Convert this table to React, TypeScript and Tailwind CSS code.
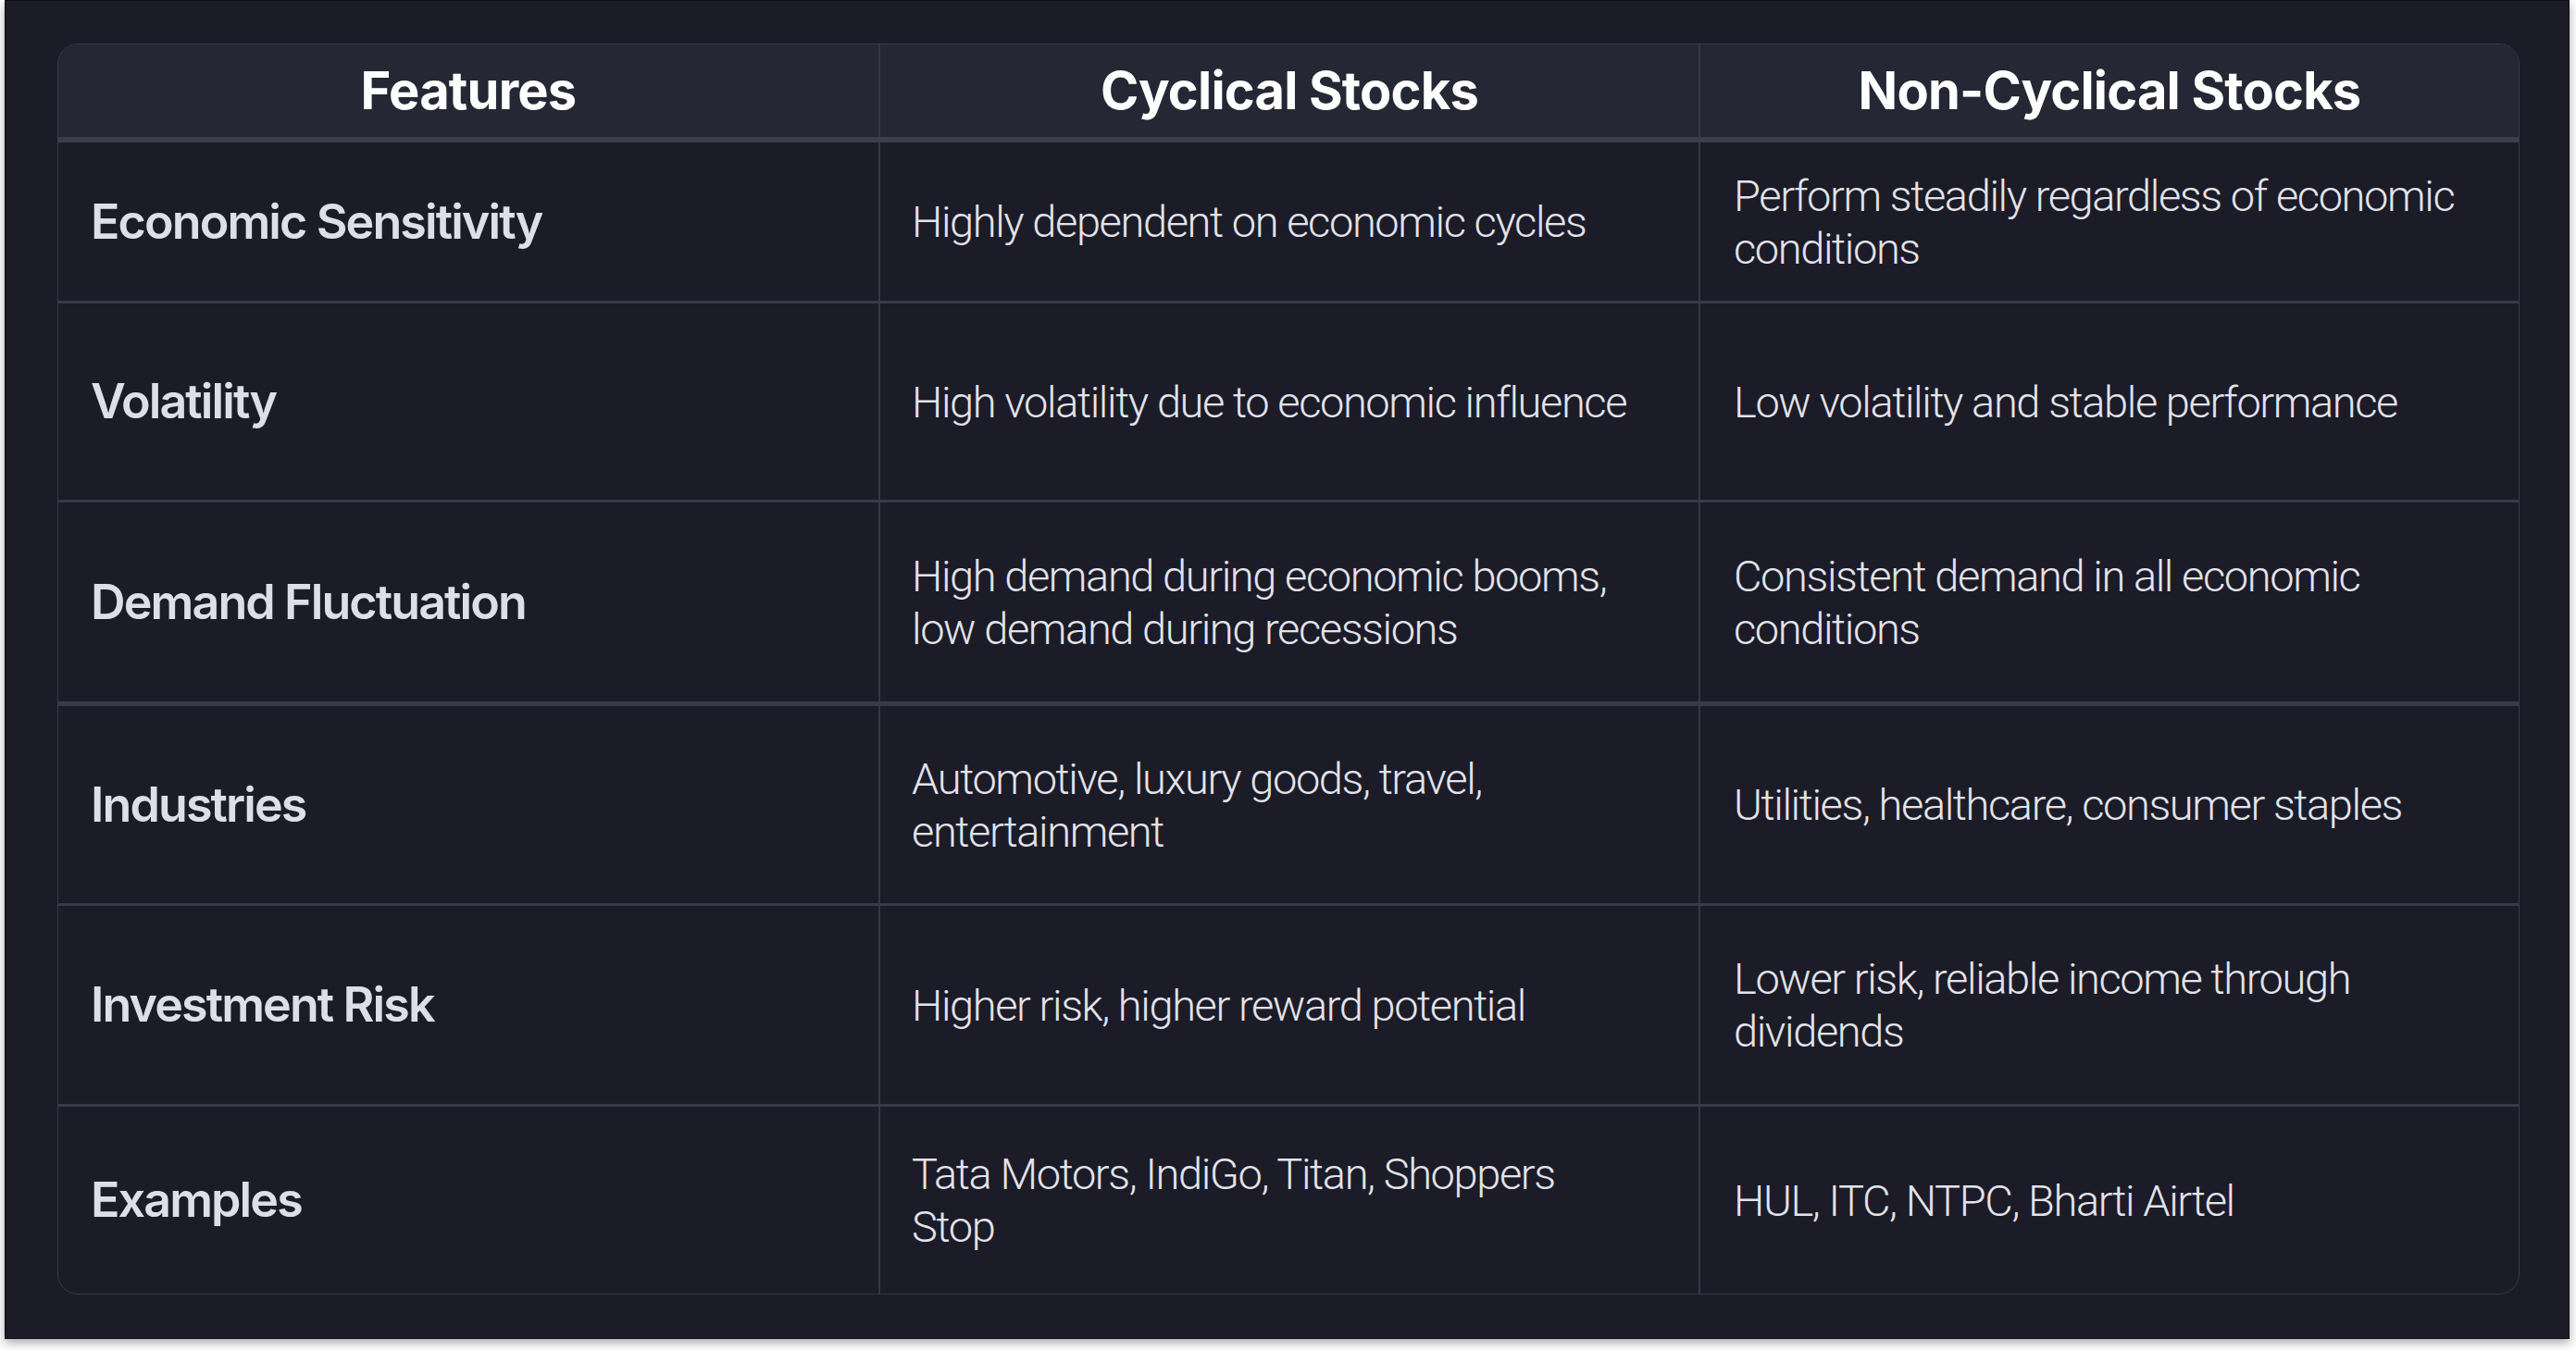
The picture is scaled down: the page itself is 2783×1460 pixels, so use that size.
const rows = [
  {
    feature: "Economic Sensitivity",
    cyclical: "Highly dependent on economic cycles",
    nonCyclical: "Perform steadily regardless of economic conditions",
    h: "h-[174px] border-b-[3px]",
  },
  {
    feature: "Volatility",
    cyclical: "High volatility due to economic influence",
    nonCyclical: "Low volatility and stable performance",
    h: "h-[215px] border-b-[3px]",
  },
  {
    feature: "Demand Fluctuation",
    cyclical: "High demand during economic booms, low demand during recessions",
    nonCyclical: "Consistent demand in all economic conditions",
    h: "h-[220px] border-b-[5px]",
  },
  {
    feature: "Industries",
    cyclical: "Automotive, luxury goods, travel, entertainment",
    nonCyclical: "Utilities, healthcare, consumer staples",
    h: "h-[216px] border-b-[3px]",
  },
  {
    feature: "Investment Risk",
    cyclical: "Higher risk, higher reward potential",
    nonCyclical: "Lower risk, reliable income through dividends",
    h: "h-[217px] border-b-[3px]",
  },
  {
    feature: "Examples",
    cyclical: "Tata Motors, IndiGo, Titan, Shoppers Stop",
    nonCyclical: "HUL, ITC, NTPC, Bharti Airtel",
    h: "flex-1",
  },
];

const headers = ["Features", "Cyclical Stocks", "Non-Cyclical Stocks"];

export default function App() {
  return (
    <div className="min-h-screen w-full bg-white">
      <div className="ml-[5px] flex h-[1447px] w-[2771px] flex-col border border-[#0c0c12] bg-[#1b1c28] pt-[46px] pr-[53px] pb-[47px] pl-[56px] shadow-[0_4px_10px_rgba(0,0,0,0.35)]">
        <div className="flex flex-1 flex-col overflow-hidden rounded-[22px] border border-[#393a49]">
          {/* header */}
          <div className="grid h-[106px] grid-cols-3 border-b-[6px] border-[#3d3e4d] bg-[#252734]">
            {headers.map((h, i) => (
              <div
                key={h}
                className={`flex items-center justify-center text-[56px] font-bold tracking-[-0.8px] text-white [font-family:Inter,'Liberation_Sans',sans-serif] ${
                  i > 0 ? "border-l-2 border-[#363746]" : ""
                }`}
              >
                {h}
              </div>
            ))}
          </div>

          {rows.map((r) => (
            <div key={r.feature} className={`grid grid-cols-3 border-[#393a49] ${r.h}`}>
              <div className="flex items-center pl-[35px] pr-6 text-[52px] font-semibold tracking-[-1.9px] text-[#dedfe6] [font-family:Inter,'Liberation_Sans',sans-serif]">
                {r.feature}
              </div>
              <div className="flex items-center border-l-2 border-[#363746] pl-[34px] pr-[60px] text-[47px] leading-[57px] font-light tracking-[-1.4px] text-[#e3e3ea] [font-family:Roboto,'Liberation_Sans',sans-serif]">
                {r.cyclical}
              </div>
              <div className="flex items-center border-l-2 border-[#363746] pl-[36px] pr-[58px] text-[47px] leading-[57px] font-light tracking-[-1.4px] text-[#e3e3ea] [font-family:Roboto,'Liberation_Sans',sans-serif]">
                {r.nonCyclical}
              </div>
            </div>
          ))}
        </div>
      </div>
    </div>
  );
}
